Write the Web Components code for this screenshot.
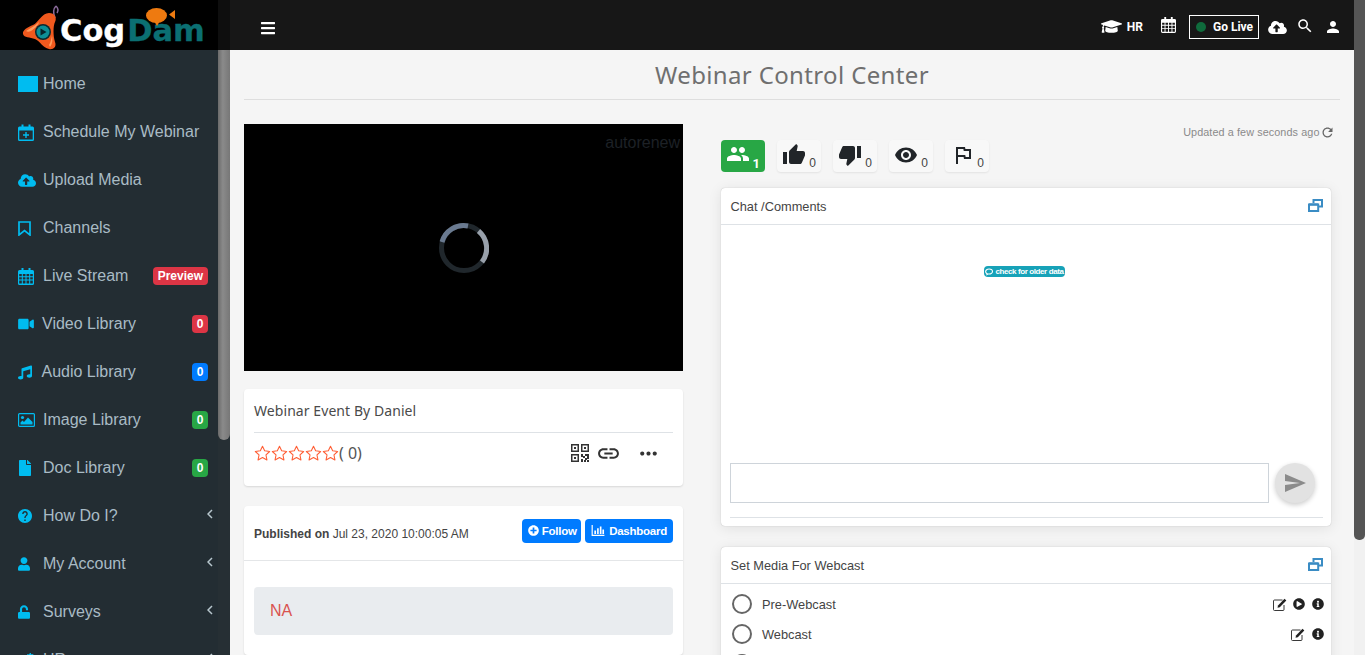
<!DOCTYPE html>
<html><head><meta charset="utf-8">
<style>
html,body{margin:0;padding:0;height:655px;overflow:hidden}
body{font-family:"Liberation Sans",Arial,sans-serif;background:#f5f5f5}
</style></head><body>
<app-shell></app-shell>
<script>
const P={
bars:[448,512,'M16 132h416c8.837 0 16-7.163 16-16V76c0-8.837-7.163-16-16-16H16C7.163 60 0 67.163 0 76v40c0 8.837 7.163 16 16 16zm0 160h416c8.837 0 16-7.163 16-16v-40c0-8.837-7.163-16-16-16H16c-8.837 0-16 7.163-16 16v40c0 8.837 7.163 16 16 16zm0 160h416c8.837 0 16-7.163 16-16v-40c0-8.837-7.163-16-16-16H16c-8.837 0-16 7.163-16 16v40c0 8.837 7.163 16 16 16z'],
cloud:[640,512,'M537.6 226.6c4.1-10.7 6.4-22.4 6.4-34.6 0-53-43-96-96-96-19.7 0-38.1 6-53.3 16.2C367 64.2 315.3 32 256 32c-88.4 0-160 71.6-160 160 0 2.7.1 5.4.2 8.1C40.2 219.8 0 273.2 0 336c0 79.5 64.5 144 144 144h368c70.7 0 128-57.3 128-128 0-61.9-44-113.6-102.4-125.4zM393.4 288H328v112c0 8.8-7.2 16-16 16h-48c-8.8 0-16-7.2-16-16V288h-65.4c-14.3 0-21.4-17.2-11.3-27.3l105.4-105.4c6.2-6.2 16.4-6.2 22.6 0l105.4 105.4c10.1 10.1 2.9 27.3-11.3 27.3z'],
search:[24,24,'M15.5 14h-.79l-.28-.27C15.41 12.59 16 11.11 16 9.5 16 5.91 13.09 3 9.5 3S3 5.91 3 9.5 5.91 16 9.5 16c1.61 0 3.09-.59 4.23-1.57l.27.28v.79l5 4.99L20.49 19l-4.99-5zm-6 0C7.01 14 5 11.99 5 9.5S7.01 5 9.5 5 14 7.01 14 9.5 11.99 14 9.5 14z'],
person:[24,24,'M12 12c2.21 0 4-1.79 4-4s-1.79-4-4-4-4 1.79-4 4 1.79 4 4 4zm0 2c-2.67 0-8 1.34-8 4v2h16v-2c0-2.66-5.33-4-8-4z'],
cap:[640,512,'M622.34 153.2L343.4 67.5c-15.2-4.67-31.6-4.67-46.79 0L17.66 153.2c-23.54 7.23-23.54 38.36 0 45.59l48.63 14.94c-10.67 13.19-17.23 29.28-17.88 46.9C38.78 266.15 32 276.11 32 288c0 10.78 5.68 19.85 13.86 25.65L20.33 428.53C18.11 438.52 25.71 448 35.94 448h56.11c10.24 0 17.84-9.48 15.62-19.47L82.14 313.65C90.32 307.85 96 298.78 96 288c0-11.57-6.47-21.25-15.66-26.87.76-15.02 8.44-28.3 20.69-36.72L296.6 284.5c9.06 2.78 26.44 6.25 46.79 0l278.95-85.7c23.55-7.24 23.55-38.36 0-45.6zM352.79 315.09c-28.53 8.76-52.84 3.92-65.59 0l-145.02-44.55L128 384c0 35.35 85.96 64 192 64s192-28.65 192-64l-14.18-113.47-145.03 44.56z'],
up:[24,24,'M1 21h4V9H1v12zm22-11c0-1.1-.9-2-2-2h-6.31l.95-4.57.03-.32c0-.41-.17-.79-.44-1.06L14.17 1 7.59 7.59C7.22 7.95 7 8.45 7 9v10c0 1.1.9 2 2 2h9c.83 0 1.54-.5 1.84-1.22l3.02-7.05c.09-.23.14-.47.14-.73v-2z'],
down:[24,24,'M15 3H6c-.83 0-1.54.5-1.84 1.22l-3.02 7.05c-.09.23-.14.47-.14.73v2c0 1.1.9 2 2 2h6.31l-.95 4.57-.03.32c0 .41.17.79.44 1.06L9.83 23l6.59-6.59c.36-.36.58-.86.58-1.41V5c0-1.1-.9-2-2-2zm4 0v12h4V3h-4z'],
eye:[24,24,'M12 4.5C7 4.5 2.73 7.61 1 12c1.73 4.39 6 7.5 11 7.5s9.27-3.11 11-7.5c-1.73-4.39-6-7.5-11-7.5zM12 17c-2.76 0-5-2.24-5-5s2.24-5 5-5 5 2.24 5 5-2.24 5-5 5zm0-8c-1.66 0-3 1.34-3 3s1.34 3 3 3 3-1.34 3-3-1.34-3-3-3z'],
flag:[24,24,'M12.36 6l.4 2H18v6h-3.36l-.4-2H7V6h5.36M14 4H5v17h2v-7h5.6l.4 2h7V6h-5.6L14 4z'],
people:[24,24,'M16 11c1.66 0 2.99-1.34 2.99-3S17.66 5 16 5c-1.66 0-3 1.34-3 3s1.34 3 3 3zm-8 0c1.66 0 2.99-1.34 2.99-3S9.66 5 8 5C6.34 5 5 6.34 5 8s1.34 3 3 3zm0 2c-2.33 0-7 1.17-7 3.5V19h14v-2.5c0-2.33-4.67-3.5-7-3.5zm8 0c-.29 0-.62.02-.97.05 1.16.84 1.97 1.97 1.97 3.45V19h6v-2.5c0-2.33-4.67-3.5-7-3.5z'],
link:[24,24,'M3.9 12c0-1.71 1.39-3.1 3.1-3.1h4V7H7c-2.76 0-5 2.24-5 5s2.24 5 5 5h4v-1.9H7c-1.71 0-3.1-1.39-3.1-3.1zM8 13h8v-2H8v2zm9-6h-4v1.9h4c1.71 0 3.1 1.39 3.1 3.1s-1.39 3.1-3.1 3.1h-4V17h4c2.76 0 5-2.24 5-5s-2.24-5-5-5z'],
more:[24,24,'M6 10c-1.1 0-2 .9-2 2s.9 2 2 2 2-.9 2-2-.9-2-2-2zm12 0c-1.1 0-2 .9-2 2s.9 2 2 2 2-.9 2-2-.9-2-2-2zm-6 0c-1.1 0-2 .9-2 2s.9 2 2 2 2-.9 2-2-.9-2-2-2z'],
qr:[24,24,'M3 11h8V3H3v8zm1.500-6.500h5v5h-5zM3 21h8v-8H3v8zm1.500-6.500h5v5h-5zM13 3v8h8V3h-8zm6.500 6.500h-5v-5h5zM6 6h2v2H6zM6 16h2v2H6zM16 6h2v2h-2zM13 13h2v3h-2zM15 15h2v2h-2zM13 18h2v3h-2zM17 13h4v2h-4zM17 17h2v2h-2zM19 15h2v3h-2zM16 19h2v2h-2zM19 19h2v2h-2z'],
send:[24,24,'M2.01 21L23 12 2.01 3 2 10l15 2-15 2z'],
refresh:[24,24,'M17.65 6.35C16.2 4.9 14.21 4 12 4c-4.42 0-7.99 3.58-7.99 8s3.57 8 7.99 8c3.73 0 6.84-2.55 7.73-6h-2.08c-.82 2.33-3.04 4-5.65 4-3.31 0-6-2.69-6-6s2.69-6 6-6c1.66 0 3.14.69 4.22 1.78L13 11h7V4l-2.35 2.35z'],
help:[24,24,'M12 2C6.48 2 2 6.48 2 12s4.48 10 10 10 10-4.48 10-10S17.52 2 12 2zm1 17h-2v-2h2v2zm2.07-7.75l-.9.92C13.45 12.9 13 13.5 13 15h-2v-.5c0-1.1.45-2.1 1.17-2.83l1.24-1.26c.37-.36.59-.86.59-1.41 0-1.1-.9-2-2-2s-2 .9-2 2H8c0-2.21 1.79-4 4-4s4 1.79 4 4c0 .88-.36 1.68-.93 2.25z','2 2 20 20'],
info:[512,512,'M256 8C119 8 8 119.1 8 256c0 137 111 248 248 248s248-111 248-248C504 119.1 393 8 256 8zm0 110c23.2 0 42 18.8 42 42s-18.8 42-42 42-42-18.8-42-42 18.8-42 42-42zm56 254c0 6.6-5.4 12-12 12h-88c-6.6 0-12-5.4-12-12v-24c0-6.6 5.4-12 12-12h12v-64h-12c-6.6 0-12-5.4-12-12v-24c0-6.6 5.4-12 12-12h64c6.6 0 12 5.4 12 12v100h12c6.6 0 12 5.4 12 12v24z'],
file:[384,512,'M224 136V0H24C10.7 0 0 10.7 0 24v464c0 13.3 10.7 24 24 24h336c13.3 0 24-10.7 24-24V160H248c-13.2 0-24-10.8-24-24zm160-14.1v6.1H256V0h6.1c6.4 0 12.5 2.5 17 7l97.9 98c4.5 4.5 7 10.6 7 16.9z'],
music:[512,512,'M470.38 1.51L150.41 96A32 32 0 0 0 128 126.51v261.41A139 139 0 0 0 96 384c-53 0-96 28.66-96 64s43 64 96 64 96-28.66 96-64V214.32l256-75v184.61a138.4 138.4 0 0 0-32-3.93c-53 0-96 28.66-96 64s43 64 96 64 96-28.65 96-64V32a32 32 0 0 0-41.62-30.49z'],
video:[576,512,'M336.2 64H47.8C21.4 64 0 85.4 0 111.8v288.4C0 426.6 21.4 448 47.8 448h288.4c26.4 0 47.8-21.4 47.8-47.8V111.8c0-26.4-21.4-47.8-47.8-47.8zm189.4 37.7L416 177.3v157.4l109.6 75.5c21.2 14.6 50.4-.3 50.4-25.8V127.5c0-25.4-29.1-40.4-50.4-25.8z'],
user:[448,512,'M224 256c70.7 0 128-57.3 128-128S294.7 0 224 0 96 57.3 96 128s57.3 128 128 128zm89.6 32h-16.7c-22.2 10.2-46.9 16-72.9 16s-50.6-5.8-72.9-16h-16.7C60.2 288 0 348.2 0 422.4V464c0 26.5 21.5 48 48 48h352c26.5 0 48-21.5 48-48v-41.6c0-74.2-60.2-134.4-134.4-134.4z'],
unlock:[448,512,'M400 256H152V152.9c0-39.6 31.7-72.5 71.3-72.9 40-.4 72.7 32.1 72.7 72v16c0 13.3 10.7 24 24 24h32c13.3 0 24-10.7 24-24v-16C376 68 307.5-.3 223.5 0 139.5.3 72 69.5 72 153.5V256H48c-26.5 0-48 21.5-48 48v160c0 26.5 21.5 48 48 48h352c26.5 0 48-21.5 48-48V304c0-26.5-21.5-48-48-48z'],
plus:[512,512,'M256 8C119 8 8 119 8 256s111 248 248 248 248-111 248-248S393 8 256 8zm144 276c0 6.6-5.4 12-12 12h-92v92c0 6.6-5.4 12-12 12h-56c-6.6 0-12-5.4-12-12v-92h-92c-6.6 0-12-5.4-12-12v-56c0-6.6 5.4-12 12-12h92v-92c0-6.6 5.4-12 12-12h56c6.6 0 12 5.4 12 12v92h92c6.6 0 12 5.4 12 12v56z'],
play:[512,512,'M256 8C119 8 8 119 8 256s111 248 248 248 248-111 248-248S393 8 256 8zm115 264L189 376c-16 9-37-3-37-21V157c0-18 21-30 37-21l182 110c16 10 16 16 0 26z'],
cogs:[640,512,'M420 0h40l8 40 30 12 34-20 28 28-20 34 12 30 40 8v40l-40 8-12 30 20 34-28 28-34-20-30 12-8 40h-40l-8-40-30-12-34 20-28-28 20-34-12-30-40-8v-40l40-8 12-30-20-34 28-28 34 20 30-12zM180 180h50l8 40 30 12 34-20 28 28-20 34 12 30 40 8v50l-40 8-12 30 20 34-28 28-34-20-30 12-8 40h-50l-8-40-30-12-34 20-28-28 20-34-12-30-40-8v-50l40-8 12-30-20-34 28-28 34 20 30-12z'],
};
const RAW={
square:'<svg viewBox="0 0 20 16"><rect width="20" height="16" fill="currentColor"/></svg>',
calplus:'<svg viewBox="0 0 16 17"><path fill="currentColor" d="M1.5 2.5h2V.5h2v2h5V.5h2v2h2A1.5 1.5 0 0 1 16 4v11.5a1.5 1.5 0 0 1-1.5 1.500h-13A1.500 1.500 0 0 1 0 15.500V4a1.500 1.500 0 0 1 1.500-1.500zm-.2 4v9h13.400v-9zM7.300 8h1.400v2.300H11v1.400H8.700V14H7.300v-2.300H5v-1.400h2.300z" fill-rule="evenodd"/></svg>',
bookmark:'<svg viewBox="0 0 13 15"><path d="M1 1h11v13L6.500 9.700 1 14z" fill="none" stroke="currentColor" stroke-width="1.700"/></svg>',
calgrid:'<svg viewBox="0 0 16 17"><path fill="currentColor" fill-rule="evenodd" d="M1.500 2h2V0h2v2h5V0h2v2h2A1.500 1.500 0 0 1 16 3.500v12a1.500 1.500 0 0 1-1.500 1.500h-13A1.500 1.500 0 0 1 0 15.500v-12A1.500 1.500 0 0 1 1.500 2zM1.200 6v2.200h2.600V6zm3.600 0v2.200h2.700V6zm3.700 0v2.200h2.700V6zm3.700 0v2.200h2.600V6zM1.200 9.200v2.400h2.600V9.200zm3.600 0v2.400h2.700V9.200zm3.700 0v2.400h2.700V9.200zm3.700 0v2.400h2.600V9.200zM1.200 12.600v3h2.600v-3zm3.600 0v3h2.700v-3zm3.700 0v3h2.700v-3zm3.700 0v3h2.600v-3z"/></svg>',
image:'<svg viewBox="0 0 17 14"><rect x=".6" y=".6" width="15.800" height="12.800" rx="1" fill="none" stroke="currentColor" stroke-width="1.200"/><circle cx="4.500" cy="4.500" r="1.600" fill="currentColor"/><path fill="currentColor" d="M2.500 11.500V9.500l2-2 1.500 1.500 4-4.500 4.500 4.500v2.500z"/></svg>',
edit:'<svg viewBox="0 0 14 13"><path d="M9.500 2H1.500a1 1 0 0 0-1 1v8.500a1 1 0 0 0 1 1H10a1 1 0 0 0 1-1V7" fill="none" stroke="currentColor" stroke-width=".9"/><path fill="currentColor" d="M5 7.500 11.500.8l1.800 1.700L6.800 9.200l-2.300.5z"/></svg>',
chart:'<svg viewBox="0 0 14 12"><path fill="currentColor" d="M0 0h1.300v10.700H14V12H0zM3 6h1.800v3.800H3zM6 3.500h1.800v6.300H6zM9 1.500h1.800v8.300H9zM11.800 5h1.800v4.800h-1.800z"/></svg>',
clone:'<svg viewBox="0 0 15 13"><path fill="none" stroke="currentColor" stroke-width="2" d="M5.500 4V1H14V7.500H10.500M1 5.500h9.200V12H1z"/><rect x="1" y="4.400" width="9.200" height="2.200" fill="currentColor"/></svg>',
star:'<svg viewBox="0 0 18 17"><path fill="none" stroke="currentColor" stroke-width="1.150" stroke-linejoin="round" d="M9 1.300l2.300 4.900 5.300.7-3.900 3.700 1 5.300L9 13.300l-4.700 2.600 1-5.300L1.400 6.900l5.300-.7z"/></svg>',
chat:'<svg viewBox="0 0 10 8"><ellipse cx="4.500" cy="3.500" rx="3.800" ry="2.800" fill="none" stroke="currentColor" stroke-width="1.200"/><path fill="currentColor" d="M2 6l-1 2 3-1.200z"/></svg>',
chev:'<svg viewBox="0 0 6 10"><path d="M5 1 1 5l4 4" fill="none" stroke="currentColor" stroke-width="1.500"/></svg>',
};
function icon(n,w,h){
  const s=`width:${w}px;height:${h}px;display:block;flex:none`;
  if(RAW[n])return RAW[n].replace('<svg',`<svg style="${s}"`);
  const p=P[n];return `<svg style="${s}" viewBox="${p[3]||`0 0 ${p[0]} ${p[1]}`}"><path fill="currentColor" fill-rule="evenodd" d="${p[2]}"/></svg>`;
}
class El extends HTMLElement{
  constructor(){super();this.attachShadow({mode:'open'});}
  connectedCallback(){this.shadowRoot.innerHTML=this.render();}
}
customElements.define('nav-item',class extends El{render(){
  const a=k=>this.getAttribute(k);const [w,h]=(a('size')||'16,16').split(',');
  const b=a('badge');
  return `<style>:host{display:flex;align-items:center;height:48px;padding-left:18px;padding-right:10px;color:#a9bbc5;font-size:16px;line-height:48px;box-sizing:border-box}
  .i{width:${a('islot')||25}px;flex:none;color:#00bcf0;display:flex;align-items:center}
  .t{flex:1;white-space:nowrap}
  .b{color:#fff;font-weight:700;font-size:12px;line-height:18px;height:18px;padding:0 ${b&&b.length>1?5:4.65}px;border-radius:4px;background:${a('bc')||'#dc3545'}}
  .c{color:#b8c7ce;margin-right:-5px;transform:translateY(-2px)}</style>
  <span class="i">${icon(a('icon'),w,h)}</span><span class="t"><slot></slot></span>${b?`<span class="b">${b}</span>`:''}${a('arrow')!==null?`<span class="c">${icon('chev',6,10)}</span>`:''}`;
}});
customElements.define('app-logo',class extends El{render(){return `<style>:host{display:block;height:50px;width:218px;background:#000;position:relative;overflow:hidden;box-sizing:border-box;padding:12px 0 0 60px}
 .w{font:700 30.500px/38px "DejaVu Sans",sans-serif;white-space:nowrap;color:#fff;-webkit-text-stroke:.3px currentColor}.d{color:#0b6f72;margin-left:2px}
 svg{position:absolute}</style>
 <svg style="left:20px;top:4px" width="42" height="47" viewBox="0 0 42 47">
 <path d="M35 14c-2-5-2-9 1-12M36 2c2 2 3 4 1 7" fill="none" stroke="#8a6a9a" stroke-width="1.500"/><circle cx="32" cy="15" r="2.500" fill="#6d4a70"/>
 <path fill="#f0591e" d="M3 30C2 26 8 23 13 21 18 19 22 9 29 9c6 0 8 5 6 9-2 4-2 14 0 20 2 5-2 8-6 7-6-1-9-8-14-10C10 33 4 34 3 30z"/>
 <path fill="#ff9b5c" d="M6 27c4-3 9-5 13-9-1 4-5 7-8 9-2 1-4 1-5 0zM29 41c2-3 2-6 3-9 1 4 0 9-2 11z"/>
 <circle cx="23" cy="28" r="8" fill="#0b2a30"/><circle cx="23" cy="28" r="6.500" fill="#0e8f96"/><path fill="#07242a" d="M20.500 24.500l6 3.500-6 3.500z"/></svg>
 <svg style="left:146px;top:7px" width="30" height="20" viewBox="0 0 30 20"><ellipse cx="10.500" cy="8.500" rx="10.500" ry="7.500" fill="#ee7a10"/><path fill="#ee7a10" d="M8 14l3 5 3-5zM29 3v9l-6-4.500z"/></svg>
 <div class="w">Cog<span class="d">Dam</span></div>`;}});
customElements.define('side-bar',class extends El{render(){return `<style>:host{display:flex;flex-direction:column;width:230px;flex:none;height:655px;background:#232d33;overflow:hidden}
 .h{display:flex;height:50px;flex:none;background:#0e0e0e}
 .b{display:flex;flex:1;min-height:0}.n{width:218px;flex:none;padding-top:10px;box-sizing:border-box;height:605px;overflow:hidden}
 .s{width:12px;flex:none;background:#262f34}.th{height:390px;border-radius:0 0 6px 6px;background:linear-gradient(90deg,#6b6b6b,#8a8a8a 40%,#777)}</style>
 <div class="h"><app-logo></app-logo></div><div class="b"><div class="n"><slot></slot></div><div class="s"><div class="th"></div></div></div>`;}});
customElements.define('top-bar',class extends El{render(){return `<style>:host{display:flex;align-items:center;height:50px;background:#171717;color:#fff;box-sizing:border-box;padding:4px 0 0 31px;flex:none;font:700 12px Roboto,sans-serif}
 .sp{flex:1}.r{display:flex;align-items:center;padding-right:12px}
 .live{display:flex;align-items:center;box-sizing:border-box;width:70px;height:24px;border:1px solid #fff;padding-left:6px;margin:0 9px 0 13px}
 .dot{width:10px;height:10px;border-radius:50%;background:#0f6b3c;margin-right:7px}</style>
 <span style="transform:translateY(1px)">${icon('bars',14,16)}</span><span class="sp"></span>
 <div class="r"><span style="margin-right:5px;transform:translateY(-1px)">${icon('cap',21,17)}</span><span style="margin-right:18px">HR</span>
 <span style="transform:translateY(-2px)">${icon('calgrid',15,16)}</span>
 <div class="live"><span class="dot"></span>Go Live</div>
 ${icon('cloud',19,15)}<span style="width:9px"></span><span style="transform:translateY(-1px)">${icon('search',18,18)}</span><span style="width:10px"></span>${icon('person',18,18)}</div>`;}});
customElements.define('card-box',class extends El{render(){return `<style>:host{display:block;background:#fff;border-radius:4px;box-shadow:0 1px 2px rgba(0,0,0,.12);overflow:hidden}</style><slot></slot>`;}});
customElements.define('video-panel',class extends El{render(){return `<style>:host{display:flex;align-items:center;justify-content:center;height:247px;background:#000;position:relative}
 .a{position:absolute;top:10px;right:3px;color:#1d2126;font-size:16px;line-height:18px}</style><span class="a">autorenew</span>
 <svg width="50" height="50" viewBox="0 0 50 50" fill="none" stroke-width="5"><circle cx="25" cy="25" r="22.500" stroke="#20272c"/>
 <path stroke="#6a7a90" d="M3 19A22.500 22.500 0 0 1 29 3"/><path stroke="#98a0aa" d="M39.500 8A22.500 22.500 0 0 1 43 39"/></svg>`;}});
customElements.define('stat-btn',class extends El{render(){const n=this.getAttribute('icon');return `<style>:host{display:flex;width:44px;height:32px;box-sizing:border-box;background:#f8f8f8;border-radius:4px;box-shadow:0 1px 2px rgba(0,0,0,.08);color:#212529;position:relative;padding:${this.getAttribute('pad')||'3px 0 0 5px'}}
 span{position:absolute;right:5px;bottom:2px;font:12px "Liberation Sans",sans-serif;color:#444}</style>${icon(n,24,24)}<span>0</span>`;}});
customElements.define('blue-btn',class extends El{render(){const n=this.getAttribute('icon'),pl=n=='plus';return `<style>:host{display:flex;align-items:center;height:24px;box-sizing:border-box;padding:0 ${pl?4.5:6}px 1px 6px;background:#007bff;color:#fff;border-radius:4px;font:700 11.500px "Liberation Sans",sans-serif;letter-spacing:-.25px;gap:${pl?3:4}px}</style>${icon(n,pl?11:14,11)}<slot></slot>`;}});
customElements.define('panel-head',class extends El{render(){return `<style>:host{display:flex;align-items:center;justify-content:space-between;height:37px;box-sizing:border-box;border-bottom:1px solid #dee2e6;padding:0 8px 0 9.500px;font:12.800px "Liberation Sans",sans-serif;color:#444}
 i{color:#3a8cc4;display:block;margin-top:-1px}</style><slot></slot><i>${icon('clone',15,13)}</i>`;}});
customElements.define('media-row',class extends El{render(){const p=this.hasAttribute('play');return `<style>:host{display:flex;align-items:center;height:30px;font:12.800px "Liberation Sans",sans-serif;color:#444;padding:0 7px 0 11px}
 .r{box-sizing:border-box;width:20px;height:20px;border:2px solid #666;border-radius:50%;margin-right:10px;flex:none}
 .t{flex:1}.a{display:flex;align-items:center;color:#222}</style>
 <span class="r"></span><span class="t"><slot></slot></span><span class="a">${icon('edit',14,13)}${p?`<span style="width:6px"></span>${icon('play',12,12)}`:''}<span style="width:7px"></span>${icon('info',12,12)}</span>`;}});
customElements.define('left-column',class extends El{render(){return `<style>:host{display:block;width:439px;flex:none}
 video-panel{margin-bottom:18px}
 .t{font:14px/43px "Noto Sans",sans-serif;color:#4a4a4a;height:44px;margin:0 10px;border-bottom:1px solid #dee2e6;box-sizing:border-box;letter-spacing:.07px}
 .rate{display:flex;align-items:center;padding:0 10px 13px;color:#ff5f36;height:53px;box-sizing:border-box}
 .stars{display:flex}.n{font:16px "Noto Sans",sans-serif;color:#555}
 .sp{flex:1}.ic{color:#333;display:flex;align-items:center}
 .pub{display:flex;align-items:center;height:55px;padding:0 10px;border-bottom:1px solid #e4e6e8;box-sizing:border-box;font:12px "Liberation Sans",sans-serif;color:#444}
 .pub .s{flex:1;margin-top:1px}.btns{display:flex;gap:4px;margin-top:-4px}
 .na{margin:26px 10px 20px;height:48px;background:#e9ecef;border-radius:4px;padding-left:16px;font:16px/48px "Liberation Sans",sans-serif;color:#d9534f}
 card-box+card-box{margin-top:20px}</style>
 <video-panel></video-panel>
 <card-box><div class="t">Webinar Event By Daniel</div>
 <div class="rate"><span class="stars">${icon('star',17,16).repeat(5)}</span><span class="n">( 0)</span><span class="sp"></span>
 <span class="ic">${icon('qr',24,24)}<span style="width:4px"></span>${icon('link',25,25)}<span style="width:15px"></span>${icon('more',25,25)}<span style="width:12px"></span></span></div></card-box>
 <card-box><div class="pub"><span class="s"><b>Published on</b> Jul 23, 2020 10:00:05 AM</span><span class="btns"><blue-btn icon="plus">Follow</blue-btn><blue-btn icon="chart">Dashboard</blue-btn></span></div>
 <div class="na">NA</div></card-box>`;}});
customElements.define('right-column',class extends El{render(){return `<style>:host{display:block;width:610px;flex:none}
 .u{display:flex;justify-content:flex-end;align-items:center;height:16px;font:10.800px "Liberation Sans",sans-serif;color:#8a8a8a;letter-spacing:.1px;margin-right:-3.500px}
 .u i{color:#666;display:block}
 .st{display:flex;gap:12px;margin:0 0 16px;height:32px}
 .g{width:44px;height:32px;background:#28a745;border-radius:4px;color:#fff;position:relative;padding:2px 0 0 5px;box-sizing:border-box}
 .g b{position:absolute;right:5px;bottom:1px;font:700 13px Roboto,sans-serif}
 .chat{height:301px;position:relative}
 .older{position:absolute;left:263px;top:41px;height:11px;width:81px;border-radius:4px;background:#17a2b8;color:#fff;font:700 8px/11px "Liberation Sans",sans-serif;display:flex;align-items:center;justify-content:center;gap:1px;letter-spacing:-.4px;white-space:nowrap}
 .in{display:flex;gap:6px;align-items:center;margin:0 8px 0 9px;padding-top:238px;padding-bottom:14px;border-bottom:1px solid #dee2e6}
 .box{width:539px;flex:none;height:40px;box-sizing:border-box;border:1px solid #ced4da;background:#fff}
 .snd{width:40px;height:40px;border-radius:50%;background:#e2e2e2;color:#8b8b8b;display:flex;align-items:center;justify-content:center;box-shadow:0 2px 5px rgba(0,0,0,.2);box-sizing:border-box}
 card-box{box-shadow:0 0 1px rgba(0,0,0,.3),0 2px 14px rgba(0,0,0,.09)}
 card-box+card-box{margin-top:21px}</style>
 <div class="u">Updated a few seconds ago<i>${icon('refresh',15,15)}</i></div>
 <div class="st"><div class="g">${icon('people',24,24)}<b>1</b></div>
 <stat-btn icon="up"></stat-btn><stat-btn icon="down"></stat-btn><stat-btn icon="eye"></stat-btn><stat-btn icon="flag" pad="3px 0 0 6px"></stat-btn></div>
 <card-box><panel-head>Chat /Comments</panel-head><div class="chat"><span class="older">${icon('chat',9,8)}check for older data</span>
 <div class="in"><div class="box"></div><div class="snd">${icon('send',24,24)}</div></div></div></card-box>
 <card-box><panel-head>Set Media For Webcast</panel-head><div style="padding-top:5px"><media-row play>Pre-Webcast</media-row><media-row>Webcast</media-row><media-row play>Post-Webcast</media-row></div></card-box>`;}});
customElements.define('page-main',class extends El{render(){return `<style>:host{display:flex;flex-direction:column;flex:1;min-width:0;height:655px;overflow:hidden;background:#f5f5f5}
 .hd{margin:0 14px;height:50px;border-bottom:1px solid #dedede;box-sizing:border-box;text-align:center;font:24px/49px "Noto Sans",sans-serif;color:#6f6f6f;flex:none;letter-spacing:.36px}
 .cols{display:flex;padding:24px 0 0 14px;gap:38px;align-items:flex-start}</style>
 <top-bar></top-bar><div class="hd">Webinar Control Center</div><div class="cols"><left-column></left-column><right-column></right-column></div>`;}});
customElements.define('page-scroll',class extends El{render(){return `<style>:host{display:block;width:11px;flex:none;height:655px;background:#f1f1f1}.t{height:540px;background:#555;border-radius:0 0 5px 5px}</style><div class="t"></div>`;}});
customElements.define('app-shell',class extends El{render(){return `<style>:host{display:flex;width:1365px;height:655px;overflow:hidden}</style>
 <side-bar>
 <nav-item icon="square" size="20,16">Home</nav-item>
 <nav-item icon="calplus" size="16,17">Schedule My Webinar</nav-item>
 <nav-item icon="cloud" size="18,15">Upload Media</nav-item>
 <nav-item icon="bookmark" size="13,15">Channels</nav-item>
 <nav-item icon="calgrid" size="16,17" badge="Preview">Live Stream</nav-item>
 <nav-item icon="video" size="16,14" islot="24" badge="0">Video Library</nav-item>
 <nav-item icon="music" size="14,15" islot="23.500" badge="0" bc="#007bff">Audio Library</nav-item>
 <nav-item icon="image" size="17,14" badge="0" bc="#28a745">Image Library</nav-item>
 <nav-item icon="file" size="14,16" badge="0" bc="#28a745">Doc Library</nav-item>
 <nav-item icon="help" size="14,14" arrow>How Do I?</nav-item>
 <nav-item icon="user" size="12,14" arrow>My Account</nav-item>
 <nav-item icon="unlock" size="12,14" arrow>Surveys</nav-item>
 <nav-item icon="cogs" size="18,14" arrow>HR</nav-item>
 </side-bar><page-main></page-main><page-scroll></page-scroll>`;}});
</script>
</body></html>
